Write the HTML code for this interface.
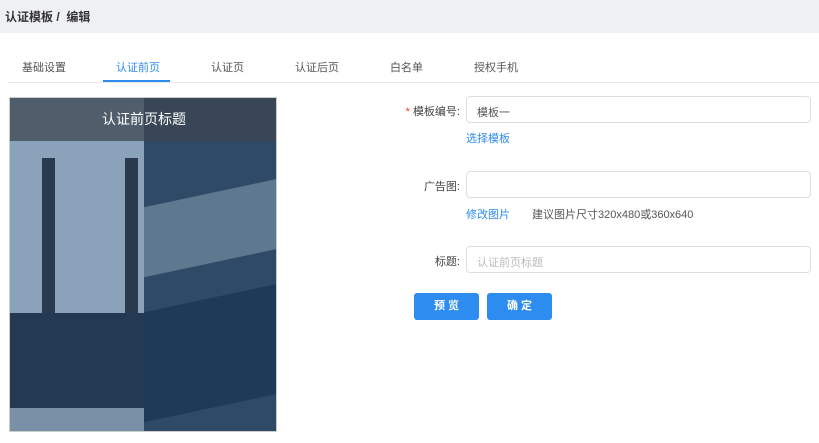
<!DOCTYPE html>
<html><head><meta charset="utf-8"><style>
*{margin:0;padding:0;box-sizing:border-box}
body{width:819px;height:443px;background:#fff;font-family:"Liberation Sans","Noto Sans CJK SC",sans-serif;font-size:12px;color:#333;position:relative;overflow:hidden}
.hdr{position:absolute;left:0;top:0;width:819px;height:33px;background:#eef0f4;font-size:12px;font-weight:bold;color:#333;padding:8px 0 0 5px}
.tab{position:absolute;top:59px;font-size:11px;color:#555}
.line{position:absolute;left:8px;right:0;top:82px;height:1px;background:#e8e8e8}
.ul{position:absolute;left:103px;width:67px;top:80px;height:2px;background:#2d8cf0}
.img{position:absolute;left:9px;top:97px;width:268px;height:335px;background:#8ea6bd;overflow:hidden;border:1px solid #ccc}
.lbl{position:absolute;font-size:11px;color:#444;text-align:right;width:80px}
.in{position:absolute;left:466px;width:345px;height:27px;border:1px solid #dcdee2;border-radius:4px;font-size:11px;padding:7px 10px;color:#555}
.lk{position:absolute;font-size:11px;color:#2d8cf0}
.btn{position:absolute;top:293px;width:65px;height:27px;background:#2d8cf0;border-radius:3px;color:#fff;font-size:11px;font-weight:bold;text-align:center;line-height:27px}
</style></head><body>
<div class="hdr">认证模板 / &nbsp;编辑</div>
<div class="tab" style="left:22px">基础设置</div>
<div class="tab" style="left:116px;color:#2d8cf0">认证前页</div>
<div class="tab" style="left:211px">认证页</div>
<div class="tab" style="left:295px">认证后页</div>
<div class="tab" style="left:390px">白名单</div>
<div class="tab" style="left:474px">授权手机</div>
<div class="line"></div><div class="ul"></div>
<div class="img">
<div style="position:absolute;left:0;top:0;width:134px;height:335px;background:#8aa3ba"></div>
<div style="position:absolute;left:134px;top:0;width:134px;height:335px;background:#2e4a66"></div>
<div style="position:absolute;left:134px;top:95px;width:134px;height:70px;background:#5e7890;transform:skewY(-12deg)"></div>
<div style="position:absolute;left:134px;top:200px;width:134px;height:110px;background:#1f3a58;transform:skewY(-12deg)"></div>
<div style="position:absolute;left:32px;top:60px;width:13px;height:160px;background:#2a3a4c"></div>
<div style="position:absolute;left:115px;top:60px;width:13px;height:160px;background:#2a3a4c"></div>
<div style="position:absolute;left:0;top:215px;width:134px;height:95px;background:#243a54"></div>
<div style="position:absolute;left:0;top:310px;width:134px;height:25px;background:#7990a6"></div>
<div style="position:absolute;left:0;top:0;width:268px;height:43px;background:rgba(60,70,80,.75);color:#fff;font-size:14px;text-align:center;line-height:43px">认证前页标题</div>
</div>
<div class="lbl" style="left:380px;top:103px"><span style="color:#ed4014">* </span>模板编号:</div>
<div class="in" style="top:96px">模板一</div>
<div class="lk" style="left:466px;top:130px">选择模板</div>
<div class="lbl" style="left:380px;top:178px">广告图:</div>
<div class="in" style="top:171px"></div>
<div class="lk" style="left:466px;top:206px">修改图片</div>
<div style="position:absolute;left:532px;top:206px;font-size:11px;color:#555">建议图片尺寸320x480或360x640</div>
<div class="lbl" style="left:380px;top:253px">标题:</div>
<div class="in" style="top:246px;color:#bbb">认证前页标题</div>
<div class="btn" style="left:414px">预 览</div>
<div class="btn" style="left:487px">确 定</div>
</body></html>
